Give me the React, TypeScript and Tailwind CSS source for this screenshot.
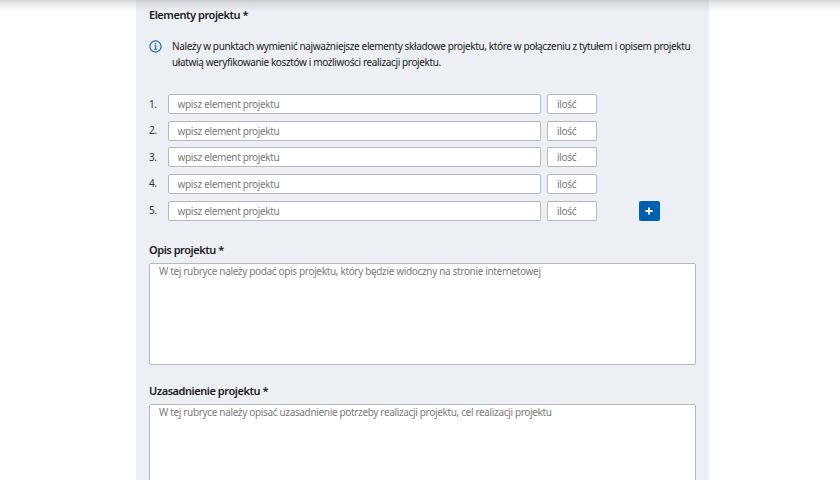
import { useState } from 'react';

const initialRows = [1, 2, 3, 4, 5];

const fieldClass =
  'block rounded-[2px] border border-[#b3b9c4] bg-white tracking-[-0.34px] text-[#333] placeholder:text-[#7b7b7b] placeholder:opacity-100 outline-none focus:border-[#0058a9]';

function InfoIcon() {
  return (
    <svg className="mt-[1.5px] h-[13px] w-[13px] shrink-0" viewBox="0 0 13 13" fill="none">
      <circle cx="6.5" cy="6.5" r="5.6" stroke="#1767b1" strokeWidth="1.15" />
      <circle cx="6.4" cy="3.8" r="0.8" fill="#1767b1" />
      <path d="M5.3 5.7h1.4v3.4M5 9.2h3.1" stroke="#1767b1" strokeWidth="1.1" />
    </svg>
  );
}

function Description({ label, placeholder }: { label: string; placeholder: string }) {
  return (
    <section>
      <h2 className="h-4 text-[11px] leading-4 font-semibold tracking-[-0.45px] text-[#1b1b1b]">{label}</h2>
      <textarea
        className={`${fieldClass} mt-[5px] h-[102px] w-[546.5px] resize-none px-[9px] pt-0 text-[10px] leading-[14px]`}
        placeholder={placeholder}
      />
    </section>
  );
}

export default function App() {
  const [rows, setRows] = useState(initialRows);

  const addRow = () => setRows((r) => [...r, r.length + 1]);

  return (
    <div className="relative h-screen overflow-hidden bg-white font-['Noto_Sans','Open_Sans',sans-serif]">
      <main className="ml-[136px] flex h-[520px] w-[572.5px] flex-col bg-[#eceff4] pt-[7px] pl-[13px]">
        <h2 className="h-4 text-[11px] leading-4 font-semibold tracking-[-0.45px] text-[#1b1b1b]">
          Elementy projektu *
        </h2>

        <div className="mt-[15px] flex h-[33px] gap-[10px]">
          <InfoIcon />
          <p className="text-[10px] leading-[16.4px] tracking-[-0.37px] whitespace-nowrap text-[#1b1b1b]">
            Należy w punktach wymienić najważniejsze elementy składowe projektu, które w połączeniu z tytułem i opisem projektu
            <br />
            ułatwią weryfikowanie kosztów i możliwości realizacji projektu.
          </p>
        </div>

        <div className="mt-[23px] flex flex-col gap-[6.65px]">
          {rows.map((n) => (
            <div key={n} className="flex h-5 items-center text-[10px]">
              <span className="w-[18.5px] tracking-[-0.37px] text-[#333]">{n}.</span>
              <input className={`${fieldClass} h-5 w-[373.5px] px-[9px]`} placeholder="wpisz element projektu" />
              <input className={`${fieldClass} ml-[6px] h-5 w-[49.5px] px-[9px]`} placeholder="ilość" />
              {n === rows.length && (
                <button
                  onClick={addRow}
                  aria-label="Dodaj element"
                  className="ml-[42.5px] flex h-5 w-[20.5px] items-center justify-center rounded-[2px] bg-[#0060b0]"
                >
                  <svg className="h-[8px] w-[8px]" viewBox="0 0 8 8">
                    <path d="M4 .4v7.2M.4 4h7.2" stroke="white" strokeWidth="1.8" />
                  </svg>
                </button>
              )}
            </div>
          ))}
        </div>

        <div className="mt-[21.4px] flex flex-col gap-[18.4px]">
          <Description
            label="Opis projektu *"
            placeholder="W tej rubryce należy podać opis projektu, który będzie widoczny na stronie internetowej"
          />
          <Description
            label="Uzasadnienie projektu *"
            placeholder="W tej rubryce należy opisać uzasadnienie potrzeby realizacji projektu, cel realizacji projektu"
          />
        </div>
      </main>
      {/* shadow of the sticky header above */}
      <div className="pointer-events-none absolute inset-x-0 top-0 h-3 bg-gradient-to-b from-black/15 via-black/5 to-transparent" />
    </div>
  );
}
